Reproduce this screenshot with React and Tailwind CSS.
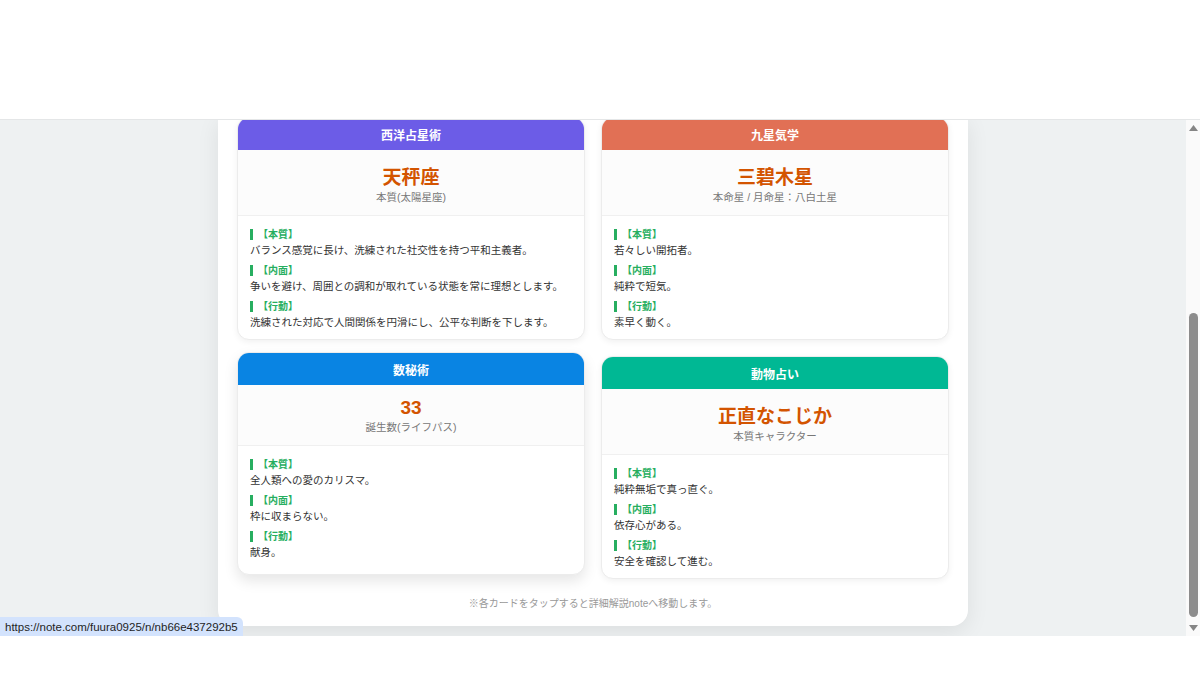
import React from "react";

const cards = [
  {
    name: "西洋占星術",
    head: "bg-[#6c5ce7]",
    title: "天秤座",
    sub: "本質(太陽星座)",
    items: [
      ["【本質】", "バランス感覚に長け、洗練された社交性を持つ平和主義者。"],
      ["【内面】", "争いを避け、周囲との調和が取れている状態を常に理想とします。"],
      ["【行動】", "洗練された対応で人間関係を円滑にし、公平な判断を下します。"],
    ],
  },
  {
    name: "九星気学",
    head: "bg-[#e17055]",
    title: "三碧木星",
    sub: "本命星 / 月命星：八白土星",
    items: [
      ["【本質】", "若々しい開拓者。"],
      ["【内面】", "純粋で短気。"],
      ["【行動】", "素早く動く。"],
    ],
  },
  {
    name: "数秘術",
    head: "bg-[#0984e3]",
    title: "33",
    sub: "誕生数(ライフパス)",
    hover: true,
    items: [
      ["【本質】", "全人類への愛のカリスマ。"],
      ["【内面】", "枠に収まらない。"],
      ["【行動】", "献身。"],
    ],
  },
  {
    name: "動物占い",
    head: "bg-[#00b894]",
    title: "正直なこじか",
    sub: "本質キャラクター",
    items: [
      ["【本質】", "純粋無垢で真っ直ぐ。"],
      ["【内面】", "依存心がある。"],
      ["【行動】", "安全を確認して進む。"],
    ],
  },
];

const Card = ({ card }) => {
  return (
    <a
      href="#"
      className={
        "flex flex-col bg-white rounded-xl overflow-hidden border border-[#ececec] " +
        (card.hover
          ? "-translate-y-1 shadow-[0_6px_14px_rgba(0,0,0,0.10)]"
          : "shadow-[0_2px_6px_rgba(0,0,0,0.06)]")
      }
    >
      <div className={"h-8 flex items-center justify-center text-white text-[12px] font-bold " + card.head}>
        {card.name}
      </div>
      <div className="bg-[#fcfcfc] border-b border-[#f0f0f0] pt-3 pb-[11px] text-center">
        <div className="text-[19px] font-bold text-[#d35400]">{card.title}</div>
        <div className="text-[10.5px] text-[#777]">{card.sub}</div>
      </div>
      <div className="flex-1 flex flex-col gap-[8px] px-3 pt-[13px] pb-[10px]">
        {card.items.map(([label, text]) => (
          <div key={label}>
            <div className="border-l-[3px] border-[#27ae60] pl-[5px] mb-[2px] text-[10px] leading-[1.1] font-bold text-[#27ae60]">
              {label}
            </div>
            <div className="text-[10.5px] text-[#333]">{text}</div>
          </div>
        ))}
      </div>
    </a>
  );
};

export default function App() {
  return (
    <div
      className="relative w-[1200px] h-[675px] overflow-hidden bg-white leading-[normal]"
      style={{ fontFamily: '"Liberation Sans", "Noto Sans CJK JP", sans-serif' }}
    >
      {/* top blank area */}
      <div className="h-[120px] bg-white border-b border-[#e4e6e7]" />

      {/* scrolled page */}
      <div className="h-[516px] flex bg-[#eef1f2]">
        <div className="flex-1 overflow-hidden">
          <div className="w-[750px] mx-auto bg-white rounded-b-2xl shadow-[0_6px_22px_rgba(0,0,0,0.08)] px-[19px] pb-4">
            <div className="grid grid-cols-2 gap-4 -mt-[3px]">
              {cards.map((c) => (
                <Card key={c.name} card={c} />
              ))}
            </div>
            <p className="mt-4 text-center text-[10px] text-[#999]">
              ※各カードをタップすると詳細解説noteへ移動します。
            </p>
          </div>
        </div>

        {/* scrollbar */}
        <div className="w-[14px] bg-[#fafafa] flex flex-col items-center">
          <div className="h-[16px] flex items-center justify-center">
            <svg width="9" height="6" viewBox="0 0 9 6">
              <path d="M4.5 0L9 6H0z" fill="#858585" />
            </svg>
          </div>
          <div className="flex-1 w-full flex flex-col items-center">
            <div className="mt-auto mb-[3px] w-[9px] h-[304px] rounded-full bg-[#8c8c8c]" />
          </div>
          <div className="h-[16px] flex items-center justify-center">
            <svg width="9" height="6" viewBox="0 0 9 6">
              <path d="M0 0H9L4.5 6z" fill="#858585" />
            </svg>
          </div>
        </div>
      </div>

      {/* bottom blank area */}
      <div className="h-[39px] bg-white" />

      {/* link status bubble */}
      <div className="absolute left-0 bottom-[39px] h-[19px] px-[5px] flex items-center bg-[#d3e3fd] rounded-tr-md text-[11.5px] text-[#1f1f1f]">
        https://note.com/fuura0925/n/nb66e437292b5
      </div>
    </div>
  );
}
